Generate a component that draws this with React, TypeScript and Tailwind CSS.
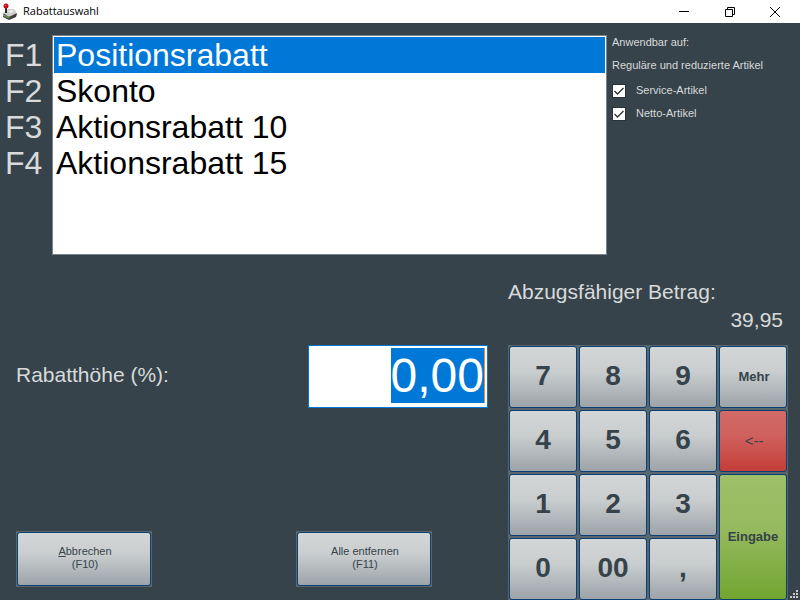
import { useEffect, useRef, useState } from 'react'

const discounts = [
  { key: 'F1', label: 'Positionsrabatt' },
  { key: 'F2', label: 'Skonto' },
  { key: 'F3', label: 'Aktionsrabatt 10' },
  { key: 'F4', label: 'Aktionsrabatt 15' },
]

const keyBase = 'rounded-[3px] border border-[#0a3f74] text-[#36434a]'
const greyKey = 'bg-linear-to-b from-[#d3d6d7] via-[#cacecf] via-40% to-[#9ca4a9]'

const keys = [
  { label: '7' },
  { label: '8' },
  { label: '9' },
  { label: 'Mehr', className: `${greyKey} pl-[2px] text-[13px] font-bold` },
  { label: '4' },
  { label: '5' },
  { label: '6' },
  {
    label: '<--',
    className: 'bg-linear-to-b from-[#d26a67] via-[#cf615e] via-40% to-[#c43c38] pl-[2px] text-[15px]',
  },
  { label: '1' },
  { label: '2' },
  { label: '3' },
  {
    label: 'Eingabe',
    className: 'row-span-2 bg-linear-to-b from-[#9dc068] via-[#97bb60] via-40% to-[#72a52f] text-[13px] font-bold',
  },
  { label: '0' },
  { label: '00' },
  { label: ',' },
]

function AppIcon() {
  return (
    <svg width="16" height="18" viewBox="0 0 16 18" aria-hidden="true">
      <path d="M1 11l5-4 6 0 3 4-1 3-7 3-6-3z" fill="#3c3c3c" />
      <path d="M1 10l5-4 6 0 3 4-8 4z" fill="#cfcfcb" />
      <path d="M6 8.500l3-1.500 3 1-3 2z" fill="#f2f2f0" />
      <path d="M1 11l6 3v1.500l-6-2.500z" fill="#8d8d88" />
      <path d="M3 12.500l3 1.500 2-1 0 1.500-2 1-3-1.500z" fill="#5c8a3a" />
      <path d="M3 4h2v6H3z" fill="#2b2b2b" />
      <circle cx="4" cy="3" r="2.500" fill="#c40f18" />
      <circle cx="3.500" cy="2.500" r=".8" fill="#ef5a5a" />
    </svg>
  )
}

function TitleBar() {
  return (
    <header className="flex h-[23px] shrink-0 items-center bg-white text-black">
      <div className="flex flex-1 items-center gap-[5px] pl-[2px]">
        <AppIcon />
        <h1 className="font-['Open_Sans',sans-serif] text-[11px]">Rabattauswahl</h1>
      </div>
      <div className="flex pr-[2px]">
        <button aria-label="Minimieren" className="flex w-[46px] justify-center">
          <svg width="10" height="10" viewBox="0 0 10 10" fill="none" stroke="currentColor">
            <path d="M0 4.500h10" />
          </svg>
        </button>
        <button aria-label="Verkleinern" className="flex w-[45px] justify-center">
          <svg width="10" height="10" viewBox="0 0 10 10" fill="none" stroke="currentColor">
            <path d="M.5 2.500h7v7h-7zM2.500 2.500v-2h7v7h-2" />
          </svg>
        </button>
        <button aria-label="Schließen" className="flex w-[46px] justify-center">
          <svg width="10" height="10" viewBox="0 0 10 10" fill="none" stroke="currentColor">
            <path d="M0 0l10 10M10 0L0 10" />
          </svg>
        </button>
      </div>
    </header>
  )
}

function DiscountList() {
  const [selected, setSelected] = useState('F1')

  return (
    <div className="flex flex-1">
      <div className="w-[52px] pt-[2px] pl-[5px] text-[32px] leading-[36px]">
        {discounts.map((d) => (
          <div key={d.key}>{d.key}</div>
        ))}
      </div>
      <ul
        role="listbox"
        aria-label="Rabatte"
        className="h-[220px] flex-1 border border-[#7a828a] bg-white p-px text-[32px] leading-[36px] text-black"
      >
        {discounts.map((d) => (
          <li
            key={d.key}
            role="option"
            aria-selected={selected === d.key}
            onClick={() => setSelected(d.key)}
            className={selected === d.key ? 'bg-[#0078d7] pl-[2px] text-white' : 'pl-[2px]'}
          >
            {d.label}
          </li>
        ))}
      </ul>
    </div>
  )
}

function CheckOption({ label }: { label: string }) {
  return (
    <label className="flex h-[23px] items-center gap-[10px]">
      <span className="relative flex size-[14px]">
        <input
          type="checkbox"
          defaultChecked
          className="peer size-[14px] appearance-none border border-[#2a3238] bg-white"
        />
        <svg
          className="pointer-events-none absolute inset-0 hidden peer-checked:block"
          width="14"
          height="14"
          viewBox="0 0 14 14"
          fill="none"
          stroke="#333"
        >
          <path d="M2.500 7l3 3L11.500 4" strokeWidth="1.400" />
        </svg>
      </span>
      {label}
    </label>
  )
}

function AmountField() {
  const ref = useRef<HTMLInputElement>(null)

  useEffect(() => {
    ref.current?.focus()
    ref.current?.select()
  }, [])

  return (
    <div className="flex h-[63px] w-[180px] border border-[#0078d7] bg-white pt-[2px] pr-[2px]">
      <input
        id="rate"
        ref={ref}
        defaultValue="0,00"
        className="h-[55px] w-full min-w-0 text-right text-[48px] leading-[55px] text-black outline-none selection:bg-[#0078d7] selection:text-white"
      />
      <span className="h-[55px] w-px shrink-0 bg-[#ff8728]" />
    </div>
  )
}

function ActionButton({ children }: { children: React.ReactNode }) {
  return (
    <div className="bg-[#5b656c] p-px">
      <button
        className={`h-[54px] w-[134px] pb-[2px] pl-[2px] text-[11px] leading-[13px] ${keyBase} ${greyKey}`}
      >
        {children}
      </button>
    </div>
  )
}

function Keypad() {
  return (
    <div className="grid auto-rows-[62px] grid-cols-4 gap-[2px] bg-[#5b656c] px-px pt-px">
      {keys.map((k) => (
        <button key={k.label} className={`${keyBase} ${k.className ?? `${greyKey} pb-[2px] text-[28px] font-bold`}`}>
          {k.label}
        </button>
      ))}
    </div>
  )
}

export default function App() {
  return (
    <div className="relative flex min-h-screen flex-col bg-[#36434a] font-['Liberation_Sans',Arial,sans-serif] text-[#d8dadb]">
      <TitleBar />
      <main className="flex flex-1 flex-col justify-between pt-3">
        <section className="flex">
          <DiscountList />
          <aside className="w-[193px] pt-px pl-[5px] text-[11px] leading-[13px]">
            <p>Anwendbar auf:</p>
            <p className="mt-[10px] mb-[7px]">Reguläre und reduzierte Artikel</p>
            <CheckOption label="Service-Artikel" />
            <CheckOption label="Netto-Artikel" />
          </aside>
        </section>

        <section className="flex gap-5 pr-3 pl-4">
          <div className="flex flex-1 flex-col justify-between pt-[67px] pb-[13px]">
            <div className="flex items-center justify-between text-[21px]">
              <label htmlFor="rate" className="pb-1">
                Rabatthöhe (%):
              </label>
              <AmountField />
            </div>
            <div className="flex gap-36">
              <ActionButton>
                <u>A</u>bbrechen
                <br />
                (F10)
              </ActionButton>
              <ActionButton>
                Alle entfernen
                <br />
                (F11)
              </ActionButton>
            </div>
          </div>
          <div className="w-[280px]">
            <div className="pb-[11px] text-[21px] leading-7">
              <p>Abzugsfähiger Betrag:</p>
              <p className="pr-[5px] text-right">39,95</p>
            </div>
            <Keypad />
          </div>
        </section>
      </main>
      <svg className="absolute right-[2px] bottom-[2px]" width="8" height="8" viewBox="0 0 8 8" fill="#c8c8c8">
        <path d="M6 0h2v2H6zM3 3h2v2H3zM6 3h2v2H6zM0 6h2v2H0zM3 6h2v2H3zM6 6h2v2H6z" />
      </svg>
    </div>
  )
}
